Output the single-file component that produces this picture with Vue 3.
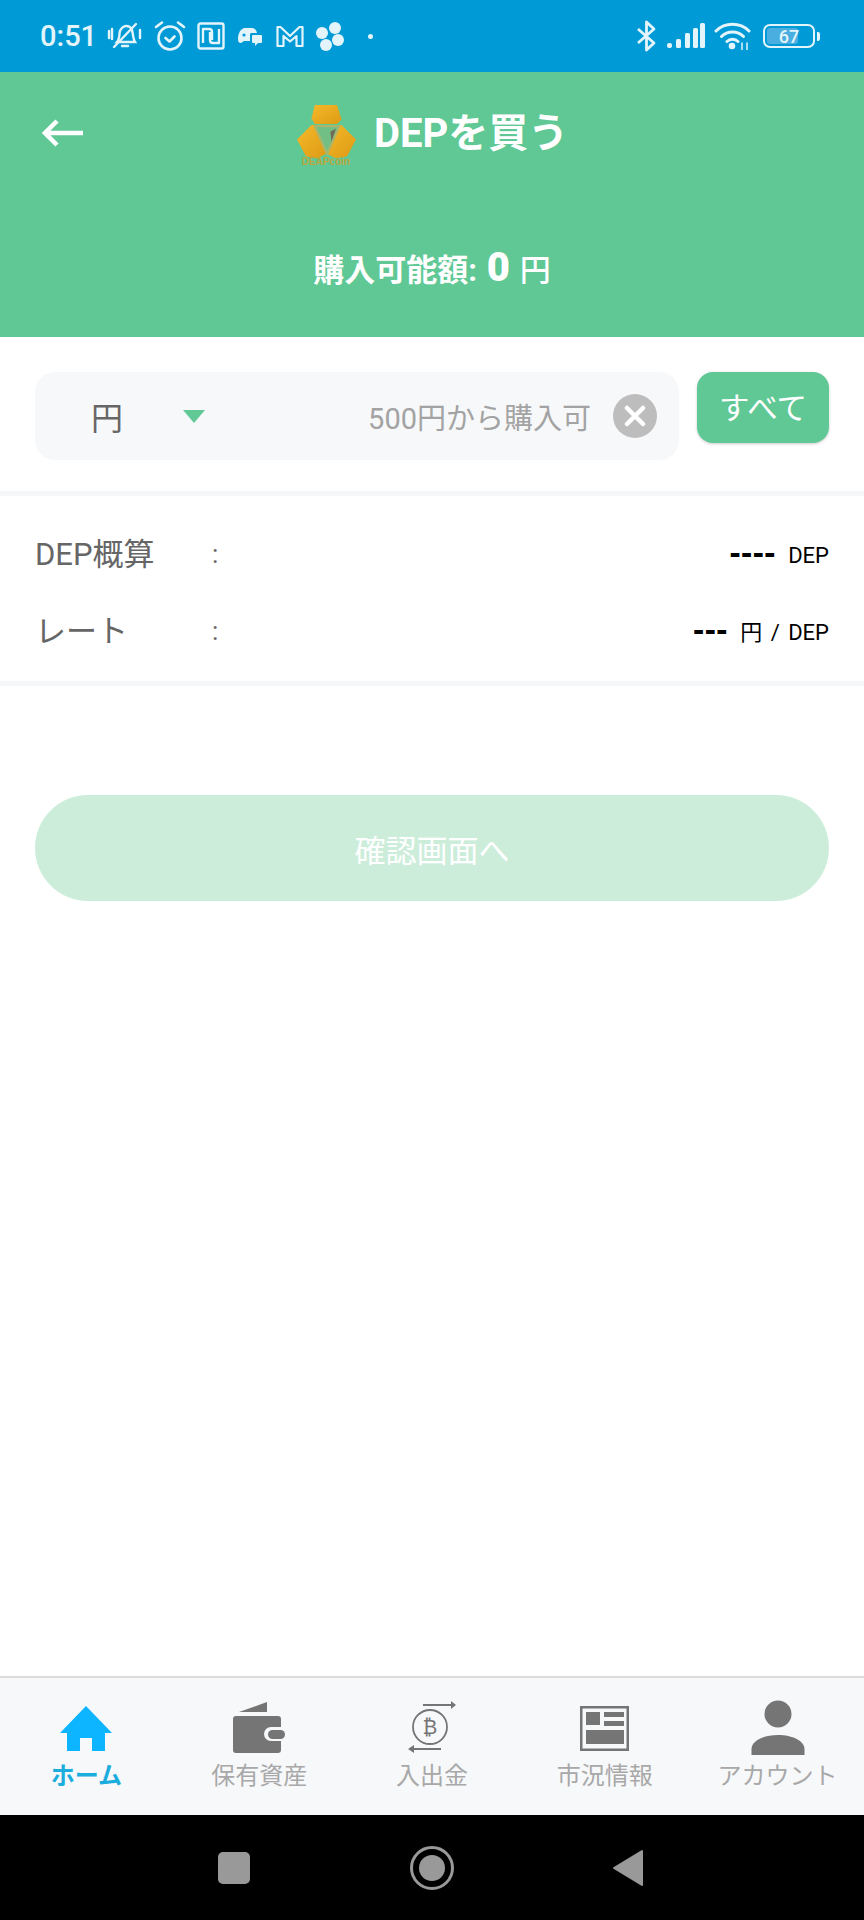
<script setup>
const tabs = [
  { key: 'home', label: 'ホーム' },
  { key: 'wallet', label: '保有資産' },
  { key: 'deposit', label: '入出金' },
  { key: 'news', label: '市況情報' },
  { key: 'account', label: 'アカウント' }
]
</script>

<template>
  <div class="page">
    <!-- ステータスバー -->
    <div class="status">
      <div class="status-left">
        <span class="time">0:51</span>
        <svg class="st" width="36" height="32" viewBox="0 0 36 32" fill="none" stroke="#e3f4fb" stroke-width="2.4" stroke-linecap="round">
          <path d="M10 22c3-3 2-8 3-11 1-3 4-5 6-5s5 1 6 4c1 3 1 9 3 12z" />
          <path d="M15 26h6M7 27 29 4M2 11v7M5 9v10M33 10v8" />
        </svg>
        <svg class="st" width="32" height="32" viewBox="0 0 32 32" fill="none" stroke="#e3f4fb" stroke-width="2.6" stroke-linecap="round" stroke-linejoin="round">
          <circle cx="16" cy="18" r="11.5" />
          <path d="M11.5 18l4 3.5 5-5M2 7l6-4.5M30 7l-6-4.5" />
        </svg>
        <svg class="st" width="28" height="28" viewBox="0 0 28 28" fill="none" stroke="#e3f4fb" stroke-width="2.4" stroke-linejoin="round">
          <rect x="1.5" y="1.5" width="25" height="25" rx="2" />
          <path d="M6 21V7h6c2 0 3 1 3 3v8M22 7v14h-6c-2 0-3-1-3-3v-8" />
        </svg>
        <svg class="st" width="26" height="24" viewBox="0 0 26 24">
          <path d="M2 15c0-6 3-11 7-11h6c3 0 5 1 6 5H15c-1 0-1 2-1 4v4H8l-3 2c-2 0-3-1-3-4z" fill="#e3f4fb" />
          <rect x="16" y="11" width="10" height="8" rx="1" fill="#e3f4fb" />
          <path d="M19 19h3l-3 3z" fill="#e3f4fb" />
          <circle cx="8" cy="11" r="1.6" fill="#009bd6" />
        </svg>
        <svg class="st st-m" width="28" height="24" viewBox="0 0 28 24" fill="none" stroke="#e3f4fb" stroke-width="2.2" stroke-linejoin="round">
          <path d="M1.5 22V3h3l9.500 9 9.500-9h3v19h-6V12l-6.500 5.500L7.500 12v10z" />
        </svg>
        <svg class="st" width="30" height="30" viewBox="0 0 30 30" fill="#e3f4fb">
          <circle cx="20" cy="7" r="6" />
          <circle cx="7" cy="12" r="6" />
          <circle cx="23" cy="19" r="6" />
          <circle cx="11" cy="24" r="6" />
          <circle cx="15" cy="15" r="2" fill="#009bd6" />
        </svg>
        <span class="dot"></span>
      </div>
      <div class="status-right">
        <svg width="22" height="32" viewBox="0 0 22 32" fill="none" stroke="#e3f4fb" stroke-width="2.8" stroke-linejoin="round">
          <path d="M2 9l16 14-7.500 7V2L18 9 2 23" />
        </svg>
        <svg width="38" height="26" viewBox="0 0 38 26" fill="#e3f4fb">
          <rect x="0" y="20" width="5" height="5" rx="2" />
          <rect x="9" y="16" width="5" height="9" rx="1.500" />
          <rect x="18" y="10" width="5" height="15" rx="1.500" />
          <rect x="26" y="5" width="5" height="20" rx="1.500" />
          <rect x="33" y="0" width="5" height="25" rx="1.500" />
        </svg>
        <svg width="37" height="28" viewBox="0 0 37 28" fill="none" stroke="#e3f4fb" stroke-width="3" stroke-linecap="round">
          <path d="M2 9c9-9 24-9 33 0M7.500 14.500c6-6 16-6 22 0M13 19.500c3-3 8-3 11 0" />
          <circle cx="18" cy="24" r="1.800" fill="#e3f4fb" />
          <path d="M28 21v7M33 21v7" stroke-width="1.500" />
        </svg>
        <div class="battery">
          <div class="battery-body">
            <div class="battery-fill"></div>
            <span class="battery-num">67</span>
          </div>
          <div class="battery-tip"></div>
        </div>
      </div>
    </div>

    <!-- ヘッダー -->
    <header class="head">
      <div class="head-top">
        <svg class="back" width="42" height="28" viewBox="0 0 42 28" fill="none" stroke="#fff" stroke-width="4.500" stroke-linejoin="miter">
          <path d="M41 14H4M15 2 3 14l12 12" />
        </svg>
        <div class="logo">
          <svg width="59" height="54" viewBox="3 0 53 48.500">
            <defs>
              <linearGradient id="gold" x1="0" y1="0" x2="1" y2="1">
                <stop offset="0" stop-color="#f6b92a" />
                <stop offset="1" stop-color="#dc9a14" />
              </linearGradient>
            </defs>
            <path d="M19 0h20l4 13-4 4H19l-3-5z" fill="url(#gold)" />
            <path d="M3 31l13-13h5l10 25-10 5-10-2z" fill="url(#gold)" />
            <path d="M56 31 43 18h-5L28 43l10 5 10-2z" fill="url(#gold)" />
            <path d="M19 19h22L30 44z" fill="#72bf86" stroke="#a9b56c" stroke-width="2" stroke-linejoin="round" />
            <path d="M33 24l5-3-4 12z" fill="#6f6a55" />
          </svg>
          <span class="logo-text">DEAPcoin</span>
        </div>
        <h1 class="title">DEPを買う</h1>
      </div>
      <p class="limit">購入可能額: <b>0</b> <span>円</span></p>
    </header>

    <main class="main">
      <section class="form">
        <div class="field">
          <span class="unit">円</span>
          <span class="caret"></span>
          <span class="placeholder">500円から購入可</span>
          <span class="clear">
            <svg width="22" height="22" viewBox="0 0 22 22" stroke="#fff" stroke-width="4.500" stroke-linecap="round">
              <path d="M3 3l16 16M19 3 3 19" />
            </svg>
          </span>
        </div>
        <button class="all" type="button">すべて</button>
      </section>

      <section class="info">
        <div class="row">
          <span class="row-label">DEP概算</span>
          <span class="colon">:</span>
          <span class="row-value"><b>----</b> DEP</span>
        </div>
        <div class="row">
          <span class="row-label">レート</span>
          <span class="colon">:</span>
          <span class="row-value"><b>---</b> 円 / DEP</span>
        </div>
      </section>

      <button class="confirm" type="button">確認画面へ</button>
    </main>

    <!-- 下部タブ -->
    <nav class="tabs">
      <div v-for="tab in tabs" :key="tab.key" class="tab" :class="{ active: tab.key === 'home' }">
        <svg width="60" height="60" viewBox="0 0 60 60">
          <path v-if="tab.key === 'home'" d="M30 9 56 36h-7v18H36V41H24v13H11V36H4z" fill="#0db4ff" />
          <g v-else-if="tab.key === 'wallet'" fill="#757575">
            <path d="M10 15 38 5v10z" />
            <path d="M7 19h42a3 3 0 0 1 3 3v8H42a7 7 0 0 0 0 14h10v9a3 3 0 0 1-3 3H7a3 3 0 0 1-3-3V22a3 3 0 0 1 3-3z" />
            <rect x="39" y="33" width="17" height="9" rx="4.500" />
          </g>
          <g v-else-if="tab.key === 'deposit'" fill="none" stroke="#757575" stroke-width="1.800">
            <circle cx="28" cy="30" r="17" />
            <text x="28" y="37" text-anchor="middle" class="btc">₿</text>
            <path d="M21 8h30M8 52h31" stroke-width="2.200" />
            <path d="M49 4l5 4-5 4z" fill="#757575" stroke="none" />
            <path d="M12 48l-6 4 6 4z" fill="#757575" stroke="none" />
          </g>
          <g v-else-if="tab.key === 'news'" fill="#757575">
            <rect x="6.250" y="10.250" width="46.500" height="42.500" fill="none" stroke="#757575" stroke-width="2.500" />
            <rect x="11" y="15" width="14" height="13" />
            <rect x="29" y="15" width="20" height="5" />
            <rect x="29" y="24" width="20" height="5" />
            <rect x="11" y="33" width="38" height="14" />
          </g>
          <g v-else fill="#757575">
            <circle cx="30" cy="17" r="13.500" />
            <path d="M3.500 58v-6c0-8 12-14 26.500-14s26.500 6 26.500 14v6z" />
          </g>
        </svg>
        <span class="tab-label">{{ tab.label }}</span>
      </div>
    </nav>

    <!-- Android ナビ -->
    <div class="sysbar">
      <span class="sys-square"></span>
      <span class="sys-circle"><span></span></span>
      <svg class="sys-back" width="32" height="38" viewBox="0 0 32 38">
        <path d="M30 2v34L2 19z" fill="#999" stroke="#999" stroke-width="2" stroke-linejoin="round" />
      </svg>
    </div>
  </div>
</template>

<style scoped>
.page {
  width: 864px;
  height: 1920px;
  display: flex;
  flex-direction: column;
  background: #fff;
  font-family: Roboto, "Noto Sans CJK JP", sans-serif;
  overflow: hidden;
}

/* ステータスバー */
.status {
  height: 72px;
  flex: none;
  background: #009bd6;
  display: flex;
  justify-content: space-between;
  align-items: center;
  padding: 0 44px 0 40px;
  box-sizing: border-box;
}
.status-left,
.status-right {
  display: flex;
  align-items: center;
}
.time {
  font-size: 29px;
  font-weight: 500;
  color: #e3f4fb;
  margin-right: 10px;
}
.st {
  margin-right: 11px;
}
.st-m {
  margin-left: 3px;
}
.dot {
  width: 5px;
  height: 5px;
  border-radius: 50%;
  background: #e3f4fb;
  margin-left: 12px;
}
.status-right {
  gap: 9px;
}
.battery {
  display: flex;
  align-items: center;
  gap: 2px;
  margin-left: 3px;
}
.battery-body {
  position: relative;
  width: 52px;
  height: 24px;
  border: 2px solid #e3f4fb;
  border-radius: 7px;
  box-sizing: border-box;
  display: flex;
  align-items: center;
  justify-content: center;
}
.battery-fill {
  position: absolute;
  left: 2px;
  top: 2px;
  bottom: 2px;
  width: 31px;
  background: #4aaee0;
  border-radius: 3px;
}
.battery-num {
  position: relative;
  font-size: 18px;
  font-weight: 500;
  color: #e3f4fb;
}
.battery-tip {
  width: 3px;
  height: 9px;
  background: #e3f4fb;
  border-radius: 0 2px 2px 0;
}

/* ヘッダー */
.head {
  height: 265px;
  flex: none;
  background: #5fc895;
  box-sizing: border-box;
  color: #fff;
}
.head-top {
  display: flex;
  align-items: center;
  height: 124px;
  padding-left: 42px;
}
.back {
  margin-right: 212px;
  margin-top: -2px;
}
.logo {
  width: 60px;
  display: flex;
  flex-direction: column;
  align-items: center;
  margin-right: 18px;
  margin-top: 3px;
}
.logo svg {
  display: block;
}
.logo-text {
  font-family: "Liberation Sans", sans-serif;
  font-size: 10px;
  font-weight: 700;
  line-height: 11px;
  margin-top: -3px;
  color: #b9a73e;
}
.title {
  margin: 0;
  font-size: 40px;
  font-weight: 700;
  line-height: 50px;
}
.limit {
  margin: 44px 0 0;
  text-align: center;
  font-size: 31px;
  font-weight: 700;
  line-height: 56px;
}
.limit b {
  font-size: 40px;
  margin: 0 2px;
}
.limit span {
  font-weight: 500;
}

/* 入力 */
.main {
  flex: 1;
  display: flex;
  flex-direction: column;
}
.form {
  padding: 35px 35px 0;
  display: flex;
  gap: 18px;
  align-items: flex-start;
  border-bottom: 5px solid #f6f7f9;
  height: 119px;
}
.field {
  width: 644px;
  height: 88px;
  flex: none;
  background: #f7f8fa;
  border-radius: 20px;
  display: flex;
  align-items: center;
  box-sizing: border-box;
  padding: 0 22px 0 56px;
}
.unit {
  font-size: 32px;
  color: #666;
}
.caret {
  width: 0;
  height: 0;
  border-left: 11px solid transparent;
  border-right: 11px solid transparent;
  border-top: 13px solid #60c995;
  margin-left: 60px;
}
.placeholder {
  margin-left: auto;
  font-size: 29px;
  color: #a3a3a3;
}
.clear {
  width: 44px;
  height: 44px;
  border-radius: 50%;
  background: #bdbdbd;
  margin-left: 22px;
  display: flex;
  align-items: center;
  justify-content: center;
}
.all {
  width: 132px;
  height: 71px;
  flex: none;
  border: none;
  border-radius: 16px;
  background: #5fc895;
  color: #fff;
  font-family: inherit;
  font-size: 30.500px;
  box-shadow: 0 1px 3px rgba(0, 0, 0, 0.2);
  padding: 0 0 4px;
}

/* 概算 */
.info {
  height: 190px;
  box-sizing: border-box;
  padding: 17px 35px 0;
  border-bottom: 5px solid #f6f7f9;
}
.row {
  display: flex;
  align-items: center;
  height: 77px;
}
.row-label {
  width: 177px;
  font-size: 31px;
  color: #666;
}
.colon {
  font-size: 26px;
  color: #666;
  padding-top: 4px;
}
.row-value {
  margin-left: auto;
  font-size: 22px;
  color: #000;
  padding-top: 4px;
  word-spacing: 3px;
}
.row-value b {
  font-size: 28px;
  font-family: "DejaVu Sans", sans-serif;
  margin-right: 4px;
}
.confirm {
  margin: 109px 35px 0;
  height: 106px;
  flex: none;
  border: none;
  border-radius: 53px;
  background: #cdeddb;
  color: #fff;
  font-family: inherit;
  font-size: 31px;
}

/* タブ */
.tabs {
  height: 139px;
  flex: none;
  box-sizing: border-box;
  background: #f7f8fa;
  border-top: 2px solid #dcdcdc;
  display: flex;
}
.tab {
  flex: 1;
  display: flex;
  flex-direction: column;
  align-items: center;
  padding-top: 19px;
}
.tab svg {
  display: block;
}
.tab-label {
  margin-top: 1px;
  font-size: 24px;
  line-height: 36px;
  color: #a8a8a8;
  white-space: nowrap;
}
.tab.active .tab-label {
  color: #1badde;
  font-weight: 700;
}
.btc {
  font-family: "DejaVu Sans", sans-serif;
  font-size: 20px;
  fill: #757575;
  stroke: none;
}

/* Android ナビ */
.sysbar {
  height: 105px;
  flex: none;
  background: #000;
  display: flex;
  align-items: center;
  padding-left: 218px;
}
.sys-square {
  width: 32px;
  height: 32px;
  border-radius: 5px;
  background: #999;
}
.sys-circle {
  width: 44px;
  height: 44px;
  box-sizing: border-box;
  border: 3px solid #999;
  border-radius: 50%;
  margin-left: 160px;
  display: flex;
  align-items: center;
  justify-content: center;
}
.sys-circle span {
  width: 26px;
  height: 26px;
  border-radius: 50%;
  background: #999;
}
.sys-back {
  margin-left: 158px;
}
</style>
